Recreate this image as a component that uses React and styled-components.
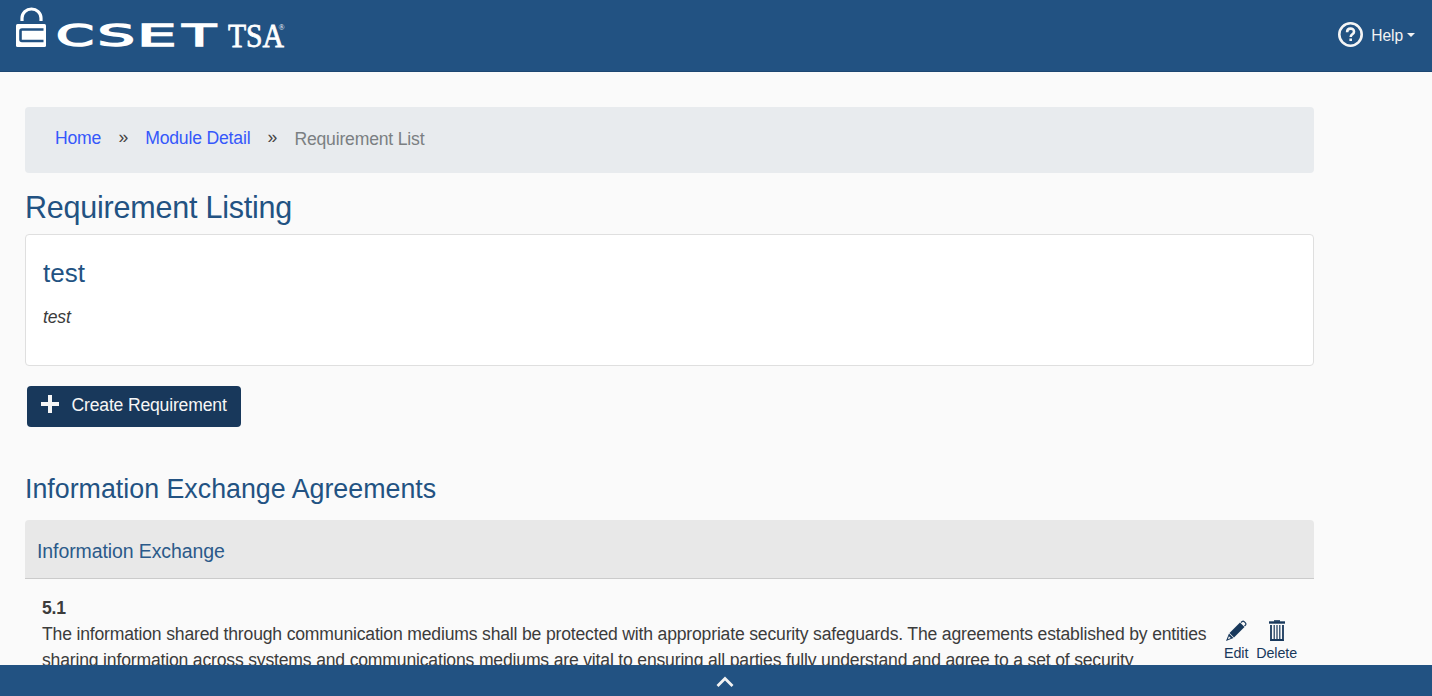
import React from "react";
import styled, { createGlobalStyle } from "styled-components";

const Global = createGlobalStyle`
  * { box-sizing: border-box; }
  html, body { margin: 0; padding: 0; }
  body {
    background: #fafafa;
    color: #3c3c3c;
    font-family: "Liberation Sans", Arial, sans-serif;
    font-size: 17.6px;
    letter-spacing: -0.185px;
    line-height: 26px;
    overflow: hidden;
  }
`;

const Page = styled.div`
  display: flex;
  flex-direction: column;
  height: 696px;
`;

const Header = styled.header`
  flex: none;
  display: flex;
  justify-content: space-between;
  align-items: flex-start;
  height: 72px;
  background: #225282;
  border-bottom: 1px solid #1c4672;
`;

const HelpMenu = styled.div`
  display: flex;
  align-items: center;
  margin: 22px 17px 0 0;
  height: 25px;
  color: #f2f2f2;
  font-size: 15.6px;
  letter-spacing: -0.1px;
`;

const HelpLabel = styled.span`
  margin: 3px 4px 0 8px;
`;

const Caret = styled.span`
  border: 4px solid transparent;
  border-top-color: #f2f2f2;
  border-bottom: 0;
`;

const Main = styled.main`
  flex: 1;
  min-height: 0;
  overflow: hidden;
  width: 1314px;
  padding: 35px 0 0 25px;
`;

const Breadcrumb = styled.nav`
  display: flex;
  height: 66px;
  padding: 18px 30px 0;
  border-radius: 4px;
  background: #e8ebee;
`;

const Crumb = styled.a`
  color: #3558fb;
  text-decoration: none;
`;

const Separator = styled.span`
  width: 44px;
  margin-top: -1px;
  text-align: center;
  color: #444;
`;

const Current = styled.span`
  padding-top: 1px;
  color: #7b7f82;
`;

const PageTitle = styled.h1`
  margin: 16px 0 8px;
  font-size: 30.5px;
  letter-spacing: -0.22px;
  line-height: 37px;
  font-weight: 400;
  color: #225282;
`;

const Card = styled.section`
  height: 132px;
  padding: 22px 17px;
  border: 1px solid #dfdfdf;
  border-radius: 4px;
  background: #fff;
`;

const CardTitle = styled.h2`
  margin: 0 0 14px;
  font-size: 26px;
  letter-spacing: 0;
  line-height: 33px;
  font-weight: 400;
  color: #225282;
`;

const CardText = styled.p`
  margin: 0;
  font-style: italic;
`;

const CreateButton = styled.button`
  display: flex;
  align-items: center;
  gap: 13px;
  width: 214px;
  height: 41px;
  margin: 19.5px 0 0 1.5px;
  padding: 0 0 2px 14px;
  border: 0;
  border-radius: 4px;
  background: #18385b;
  color: #f6f6f6;
  font: inherit;
  letter-spacing: inherit;
  white-space: nowrap;
  svg { margin-top: -3px; }
`;

const SectionTitle = styled.h2`
  margin: 45.5px 0 14px;
  font-size: 26.8px;
  letter-spacing: 0;
  line-height: 34px;
  font-weight: 400;
  color: #225282;
`;

const GroupHeader = styled.h3`
  height: 59px;
  margin: 0;
  padding: 0 12px;
  border-bottom: 1px solid #cbcbcb;
  border-radius: 4px 4px 0 0;
  background: #e8e8e8;
  color: #2b5a8a;
  font-size: 19.5px;
  letter-spacing: -0.1px;
  line-height: 62px;
  font-weight: 400;
`;

const Row = styled.article`
  display: flex;
  padding: 16px 17px 0;
`;

const RowText = styled.div`
  width: 1182px;
  white-space: nowrap;
`;

const RowNumber = styled.div`
  font-weight: 700;
`;

const Actions = styled.div`
  display: flex;
  gap: 8px;
  padding: 25px 0 0 1px;
`;

const Action = styled.a`
  display: flex;
  flex-direction: column;
  align-items: center;
  color: #18385b;
  font-size: 14.3px;
  letter-spacing: -0.1px;
  line-height: 22px;
`;

const Footer = styled.footer`
  flex: none;
  display: flex;
  justify-content: center;
  height: 31px;
  padding: 11px 0 0 17px;
  background: #225282;
`;

function Logo() {
  const letters = [["C", 56, 38], ["S", 97.5, 37.5], ["E", 137, 39.5], ["T", 182.5, 33.5]];
  return (
    <svg width="300" height="60" viewBox="0 0 300 60" fill="#fff">
      <path d="M22 21v-3a9.500 9 0 0 1 19 0v3" fill="none" stroke="#fff" strokeWidth="3.200" />
      <rect x="16" y="24" width="30" height="23" rx="1.500" />
      <path d="M43.500 29.500H22q-1.500 0-1.500 1.500v8.500q0 1.500 1.500 1.500h21.500" fill="none" stroke="#225282" strokeWidth="2.600" />
      <g fontFamily="DejaVu Sans" fontSize="29.500" stroke="#fff" strokeWidth="1.400" letterSpacing="0">
        {letters.map(([ch, x, w]) => (
          <text key={ch} x={x} y="46.300" textLength={w} lengthAdjust="spacingAndGlyphs">{ch}</text>
        ))}
      </g>
      <text x="228" y="46.500" fontFamily="Liberation Serif" fontSize="34.500" textLength="56" lengthAdjust="spacingAndGlyphs" stroke="#fff" strokeWidth=".8" letterSpacing="0">TSA</text>
      <text x="278.500" y="30" fontFamily="Liberation Serif" fontSize="8" letterSpacing="0">®</text>
    </svg>
  );
}

function HelpIcon() {
  return (
    <svg width="25" height="25" viewBox="0 0 25 25">
      <circle cx="12.500" cy="12.500" r="11.200" fill="none" stroke="#f5f5f5" strokeWidth="2.600" />
      <path d="M9.100 10.200C9.100 5.500 16 5.500 16 9.700c0 2.700-3.300 2.500-3.300 5.300" fill="none" stroke="#f5f5f5" strokeWidth="2.600" />
      <rect x="11.400" y="16.500" width="2.600" height="2.500" fill="#f5f5f5" />
    </svg>
  );
}

function PlusIcon() {
  return (
    <svg width="18" height="18" viewBox="0 0 18 18">
      <path d="M9 0v18M0 9h18" stroke="#f6f6f6" strokeWidth="4" />
    </svg>
  );
}

function PencilIcon() {
  return (
    <svg width="22" height="22" viewBox="0 0 22 22" fill="#18385b">
      <path d="M4.500 13 15 2.500l4.500 4.500L9 17.500z" />
      <path d="M4 13.500 8.500 18 1 21z" />
      <path d="M3.900 16.200 5.800 18l-2.900 1.300z" fill="#fafafa" />
      <path d="m16 2.500 1.200-1q1-.7 2 .2l1.200 1.200q.9 1 .2 2L19.500 6" fill="none" stroke="#18385b" strokeWidth="1.200" />
    </svg>
  );
}

function TrashIcon() {
  return (
    <svg width="16" height="22" viewBox="0 0 16 22" fill="none" stroke="#18385b">
      <path d="M0 2.500h16" strokeWidth="2.400" />
      <path d="M5 1h6" strokeWidth="1.600" />
      <path d="M2 5v15h12V5" strokeWidth="1.800" />
      <path d="M5.200 5V20M8 5V20M10.800 5V20" strokeWidth="1.200" />
      <path d="M1.300 20.300h13.400" strokeWidth="1.400" />
    </svg>
  );
}

export default function App() {
  return (
    <Page>
      <Global />
      <Header>
        <Logo />
        <HelpMenu>
          <HelpIcon />
          <HelpLabel>Help</HelpLabel>
          <Caret />
        </HelpMenu>
      </Header>
      <Main>
        <Breadcrumb>
          <Crumb>Home</Crumb>
          <Separator>»</Separator>
          <Crumb>Module Detail</Crumb>
          <Separator>»</Separator>
          <Current>Requirement List</Current>
        </Breadcrumb>
        <PageTitle>Requirement Listing</PageTitle>
        <Card>
          <CardTitle>test</CardTitle>
          <CardText>test</CardText>
        </Card>
        <CreateButton>
          <PlusIcon />
          Create Requirement
        </CreateButton>
        <SectionTitle>Information Exchange Agreements</SectionTitle>
        <GroupHeader>Information Exchange</GroupHeader>
        <Row>
          <RowText>
            <RowNumber>5.1</RowNumber>
            The information shared through communication mediums shall be protected with appropriate security safeguards. The agreements established by entities
            <br />
            sharing information across systems and communications mediums are vital to ensuring all parties fully understand and agree to a set of security
          </RowText>
          <Actions>
            <Action><PencilIcon />Edit</Action>
            <Action><TrashIcon />Delete</Action>
          </Actions>
        </Row>
      </Main>
      <Footer>
        <svg width="18" height="12" viewBox="0 0 18 12">
          <path d="m1.500 10 7.500-7.500 7.500 7.500" fill="none" stroke="#f2f2f2" strokeWidth="2.800" />
        </svg>
      </Footer>
    </Page>
  );
}
